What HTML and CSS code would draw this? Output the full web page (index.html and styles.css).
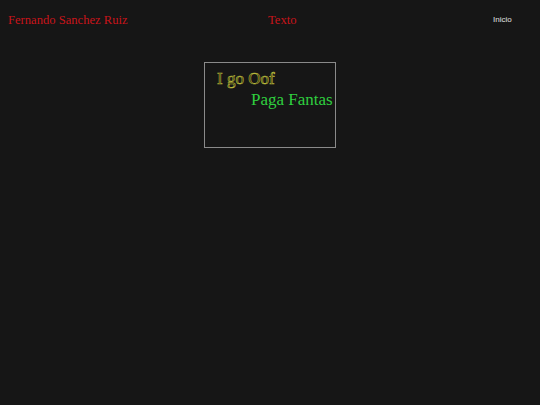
FILE: index.html
```html
<!DOCTYPE html>
<html>
<head>
<meta charset="utf-8">
<link rel="stylesheet" href="styles.css">
</head>
<body>
<header class="top">
  <span class="name">Fernando Sanchez Ruiz</span>
  <span class="texto">Texto</span>
  <a class="inicio">Inicio</a>
</header>
<main class="main">
  <div class="card">
    <p class="oof">I go Oof</p>
    <p class="paga">Paga Fantas</p>
  </div>
</main>
</body>
</html>
```
FILE: styles.css
```css
html, body {
  margin: 0;
  padding: 0;
  background: #161616;
  height: 100%;
}
body {
  font-family: "Liberation Serif", serif;
}
.top {
  display: grid;
  grid-template-columns: 260px 225px auto;
  align-items: center;
  padding: 12px 8px 0 8px;
  height: 16px;
}
.name, .texto {
  color: #c8141a;
  font-size: 12.6px;
  line-height: 16px;
}
.inicio {
  font-family: "Liberation Sans", Arial, sans-serif;
  font-size: 8px;
  color: #e0e0e0;
  line-height: 16px;
}
.main {
  display: flex;
  justify-content: center;
  padding-top: 34px;
}
.card {
  width: 130px;
  height: 84px;
  border: 1px solid #8a8a8a;
  box-sizing: content-box;
}
.card p {
  margin: 0;
  font-size: 17px;
  line-height: 22px;
}
.card .oof {
  padding: 5px 0 0 12px;
  line-height: 21px;
  color: #2c2c0c;
  -webkit-text-stroke: 0.6px #b8b83c;
}
.paga {
  padding-left: 46px;
  color: #2fcf3f;
}
```
